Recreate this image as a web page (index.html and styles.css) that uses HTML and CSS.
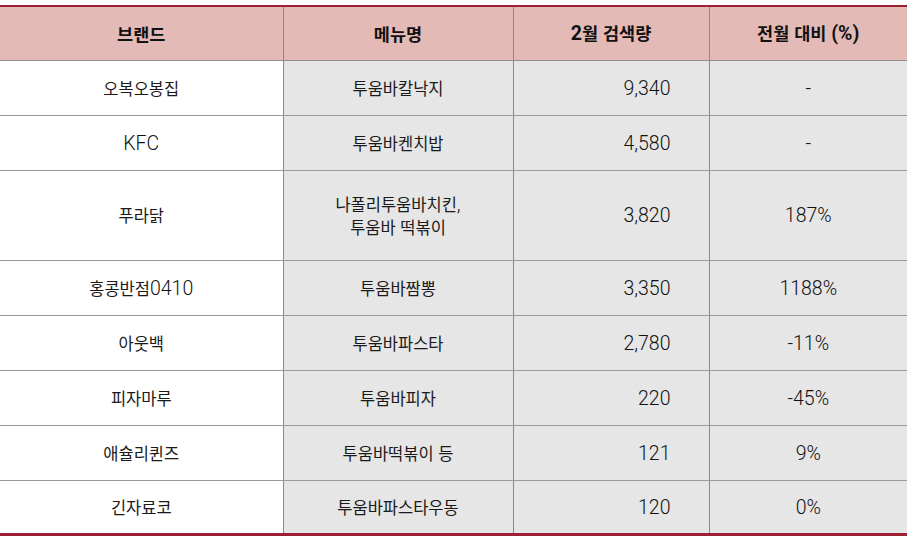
FILE: index.html
```html
<!DOCTYPE html>
<html lang="ko">
<head>
<meta charset="utf-8">
<link rel="stylesheet" href="styles.css">
</head>
<body>
<table class="data">
  <colgroup>
    <col class="c-brand"><col class="c-menu"><col class="c-search"><col class="c-change">
  </colgroup>
  <thead>
    <tr><th>브랜드</th><th>메뉴명</th><th><span class="l">2</span>월 검색량</th><th>전월 대비 <span class="l">(%)</span></th></tr>
  </thead>
  <tbody>
    <tr><td class="brand">오복오봉집</td><td>투움바칼낙지</td><td class="num l">9,340</td><td class="l">-</td></tr>
    <tr><td class="brand l">KFC</td><td>투움바켄치밥</td><td class="num l">4,580</td><td class="l">-</td></tr>
    <tr class="tall"><td class="brand">푸라닭</td><td>나폴리투움바치킨<span class="l">,</span><br>투움바 떡볶이</td><td class="num l">3,820</td><td class="l">187%</td></tr>
    <tr><td class="brand">홍콩반점<span class="l">0410</span></td><td>투움바짬뽕</td><td class="num l">3,350</td><td class="l">1188%</td></tr>
    <tr><td class="brand">아웃백</td><td>투움바파스타</td><td class="num l">2,780</td><td class="l">-11%</td></tr>
    <tr><td class="brand">피자마루</td><td>투움바피자</td><td class="num l">220</td><td class="l">-45%</td></tr>
    <tr><td class="brand">애슐리퀸즈</td><td>투움바떡볶이 등</td><td class="num l">121</td><td class="l">9%</td></tr>
    <tr class="last"><td class="brand">긴자료코</td><td>투움바파스타우동</td><td class="num l">120</td><td class="l">0%</td></tr>
  </tbody>
</table>
</body>
</html>
```
FILE: styles.css
```css
html, body {
  margin: 0;
  padding: 0;
  background: #ffffff;
}
body {
  padding-top: 5px;
  font-family: "Noto Sans CJK KR", Roboto, sans-serif;
  color: #1a1a1a;
}
.data {
  width: 907px;
  border-collapse: collapse;
  table-layout: fixed;
  font-size: 16.5px;
}
.l {
  font-family: Roboto, "Noto Sans CJK KR", sans-serif;
  font-size: 19.5px;
  font-weight: 300;
  color: #111;
}
.c-brand { width: 283px; }
.c-menu { width: 230px; }
.c-search { width: 196px; }
.c-change { width: 198px; }
.data thead th {
  height: 53px;
  padding: 0;
  background: #e3bab6;
  font-weight: 700;
  font-size: 17.5px;
  color: #111;
  border-top: 2px solid #9c1f33;
  border-bottom: 1px solid #8f8f8f;
  border-left: 1px solid #8a8a8a;
  text-align: center;
  line-height: 24px;
}
.data thead th .l { font-size: 19.5px; font-weight: 700; }
.data td {
  height: 54px;
  padding: 0;
  background: #e6e6e6;
  text-align: center;
  border-bottom: 1px solid #9a9a9a;
  border-left: 1px solid #8a8a8a;
  line-height: 23px;
}
.data th:first-child, .data td:first-child { border-left: none; }
.data td.brand { background: #ffffff; }
.data td.num { text-align: right; padding-right: 38px; }
.data tr.tall td { height: 89px; }
.data tr.last td { height: 52px; border-bottom: 3px solid #9c1f33; }
```
